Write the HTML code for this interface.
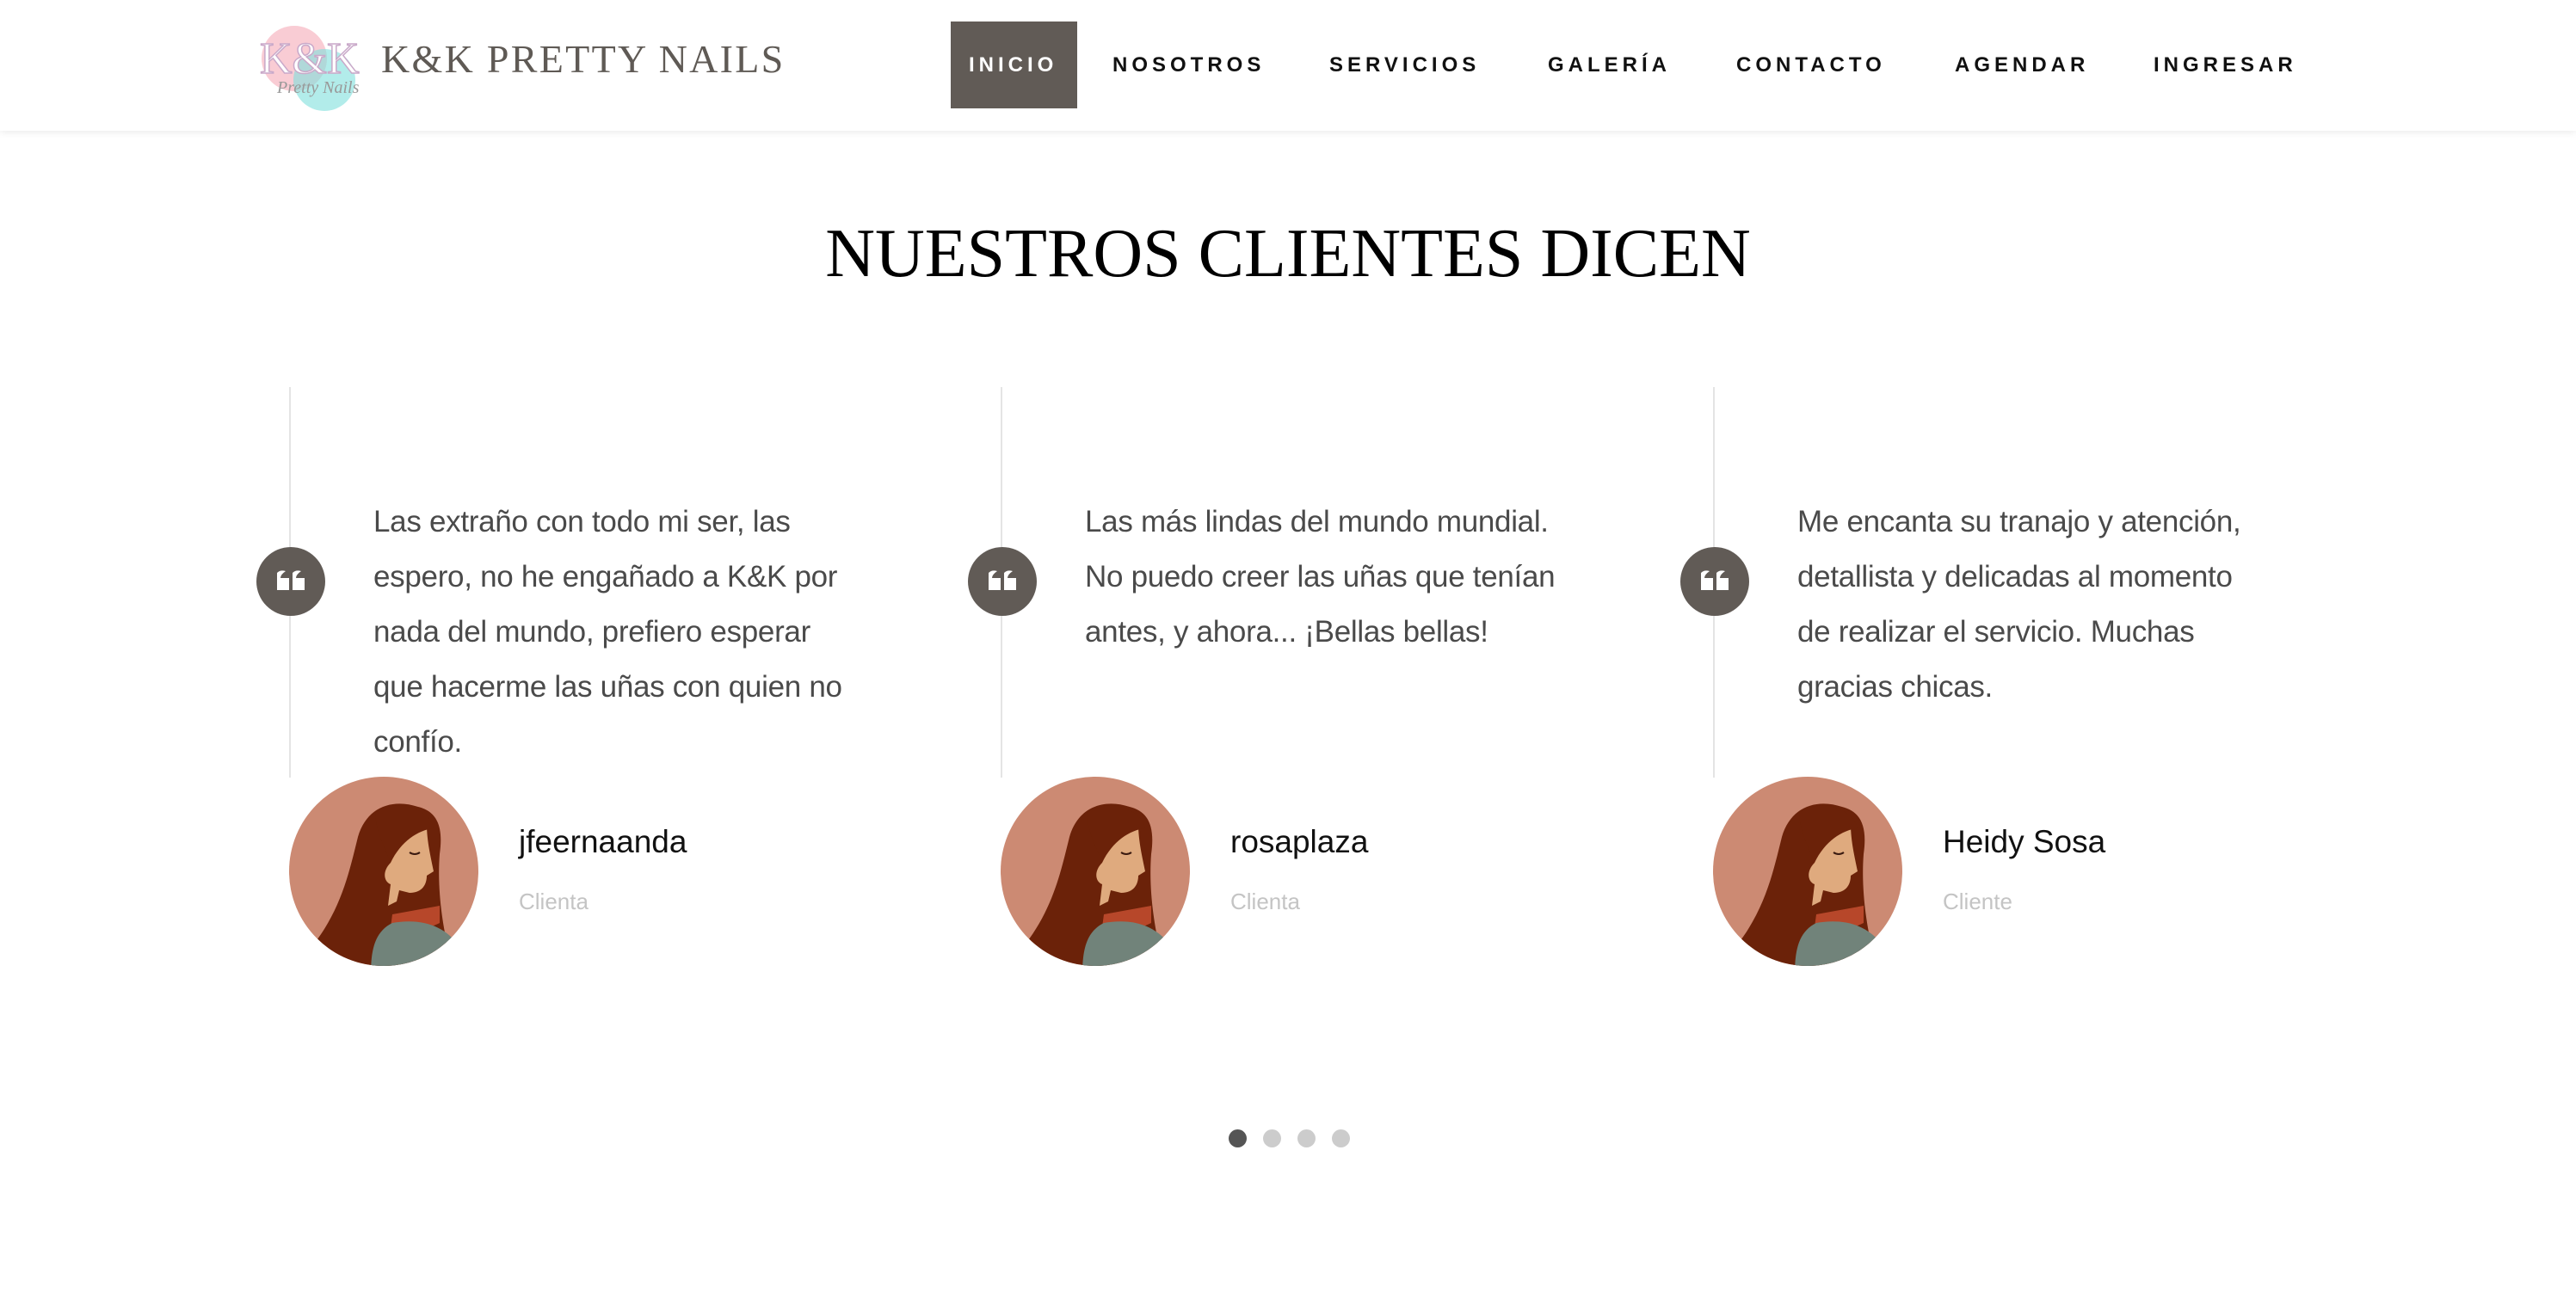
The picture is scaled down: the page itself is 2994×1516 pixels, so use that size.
<!DOCTYPE html>
<html><head><meta charset="utf-8"><style>
*{margin:0;padding:0;box-sizing:border-box}
body{width:2994px;height:1516px;background:#fff;position:relative;overflow:hidden;font-family:"Liberation Sans",sans-serif}
.hdr{position:absolute;left:0;top:0;width:2994px;height:152px;background:#fff;box-shadow:0 2px 8px rgba(0,0,0,.08)}
.logo{position:absolute;left:292px;top:23px;width:143px;height:111px}
.brand{position:absolute;left:443px;top:42px;font-family:"Liberation Serif",serif;font-size:46px;color:#5f5a55;letter-spacing:2.3px;white-space:nowrap}
.nav{position:absolute;top:62px;font-weight:bold;font-size:24px;letter-spacing:5px;color:#111;white-space:nowrap}
.ini{position:absolute;left:1105px;top:25px;width:147px;height:101px;background:#615b56}
h1{position:absolute;left:0;width:2994px;top:250px;text-align:center;font-family:"Liberation Serif",serif;font-weight:normal;font-size:80px;color:#000}
.vl{position:absolute;top:450px;width:2px;height:454px;background:#e4e4e4}
.q{position:absolute;top:636px;width:80px;height:80px;border-radius:50%;background:#615b56}
.txt{position:absolute;top:575px;width:550px;font-size:35px;letter-spacing:-0.3px;line-height:64px;color:#4a4a4a}
.av{position:absolute;top:903px;width:220px;height:220px}
.nm{position:absolute;top:958px;font-size:37px;color:#111}
.rl{position:absolute;top:1033px;font-size:26px;color:#c4c4c4}
.dot{position:absolute;top:1313px;width:21px;height:21px;border-radius:50%;background:#ccc}
</style></head><body>
<div class="hdr">
<svg class="logo" viewBox="0 0 143 111">
<circle cx="50" cy="45" r="38" fill="#f7b6c2" opacity=".7"/>
<circle cx="85" cy="70" r="36" fill="#7fe0dc" opacity=".6"/>
<text x="10" y="62" font-family="Liberation Serif" font-size="52" fill="#fff" stroke="#c9a9c9" stroke-width="1.5">K&amp;K</text>
<text x="30" y="85" font-family="Liberation Serif" font-style="italic" font-size="20" fill="#999">Pretty Nails</text>
</svg>
<div class="brand">K&amp;K PRETTY NAILS</div>
<div class="ini"></div>
<div class="nav" style="left:1126px;color:#fff">INICIO</div>
<div class="nav" style="left:1293px">NOSOTROS</div>
<div class="nav" style="left:1545px">SERVICIOS</div>
<div class="nav" style="left:1799px">GALERÍA</div>
<div class="nav" style="left:2018px">CONTACTO</div>
<div class="nav" style="left:2272px">AGENDAR</div>
<div class="nav" style="left:2503px">INGRESAR</div>
</div>
<h1>NUESTROS CLIENTES DICEN</h1>

<svg width="0" height="0" style="position:absolute"><defs>
<g id="avatar">
<clipPath id="cp"><circle cx="110" cy="110" r="110"/></clipPath>
<g clip-path="url(#cp)">
<rect width="220" height="220" fill="#cc8a73"/>
<path d="M20 205 C60 160 70 110 80 70 C90 35 120 25 150 35 C170 40 180 55 175 90 C172 130 178 170 185 200 L190 230 L10 230Z" fill="#6b2209"/>
<path d="M120 160 L118 175 C140 180 160 178 175 170 L175 150 Z" fill="#b7472a"/>
<path d="M120 170 C150 165 180 170 200 200 L190 230 L95 230 C95 200 100 180 120 170Z" fill="#71837a"/>
<path d="M118 95 C130 70 145 60 160 55 C160 75 165 95 168 110 L160 115 C160 125 155 135 140 135 L128 132 L125 145 L115 150 L118 125 C110 122 108 110 118 100Z" fill="#dfaa7e"/>
<path d="M100 40 C130 25 165 40 168 60 C150 62 130 75 118 100 C110 80 100 60 100 40Z" fill="#6b2209"/>
<path d="M140 88 Q146 92 152 88" stroke="#3a1a10" stroke-width="2" fill="none"/>
</g></g></defs></svg>

<div class="vl" style="left:336px"></div>
<div class="q" style="left:298px"><svg width="80" height="80" viewBox="0 0 80 80"><path d="M24 30 Q28 26 34 28 Q28 32 28 36 L38 36 L38 50 L24 50Z M42 30 Q46 26 52 28 Q46 32 46 36 L56 36 L56 50 L42 50Z" fill="#fff"/></svg></div>
<div class="txt" style="left:434px">Las extraño con todo mi ser, las espero, no he engañado a K&amp;K por nada del mundo, prefiero esperar que hacerme las uñas con quien no confío.</div>
<svg class="av" style="left:336px" viewBox="0 0 220 220"><use href="#avatar"/></svg>
<div class="nm" style="left:603px">jfeernaanda</div>
<div class="rl" style="left:603px">Clienta</div>

<div class="vl" style="left:1163px"></div>
<div class="q" style="left:1125px"><svg width="80" height="80" viewBox="0 0 80 80"><path d="M24 30 Q28 26 34 28 Q28 32 28 36 L38 36 L38 50 L24 50Z M42 30 Q46 26 52 28 Q46 32 46 36 L56 36 L56 50 L42 50Z" fill="#fff"/></svg></div>
<div class="txt" style="left:1261px">Las más lindas del mundo mundial. No puedo creer las uñas que tenían antes, y ahora... ¡Bellas bellas!</div>
<svg class="av" style="left:1163px" viewBox="0 0 220 220"><use href="#avatar"/></svg>
<div class="nm" style="left:1430px">rosaplaza</div>
<div class="rl" style="left:1430px">Clienta</div>

<div class="vl" style="left:1991px"></div>
<div class="q" style="left:1953px"><svg width="80" height="80" viewBox="0 0 80 80"><path d="M24 30 Q28 26 34 28 Q28 32 28 36 L38 36 L38 50 L24 50Z M42 30 Q46 26 52 28 Q46 32 46 36 L56 36 L56 50 L42 50Z" fill="#fff"/></svg></div>
<div class="txt" style="left:2089px">Me encanta su tranajo y atención, detallista y delicadas al momento de realizar el servicio. Muchas gracias chicas.</div>
<svg class="av" style="left:1991px" viewBox="0 0 220 220"><use href="#avatar"/></svg>
<div class="nm" style="left:2258px">Heidy Sosa</div>
<div class="rl" style="left:2258px">Cliente</div>

<div class="dot" style="left:1428px;background:#555"></div>
<div class="dot" style="left:1468px"></div>
<div class="dot" style="left:1508px"></div>
<div class="dot" style="left:1548px"></div>
</body></html>
